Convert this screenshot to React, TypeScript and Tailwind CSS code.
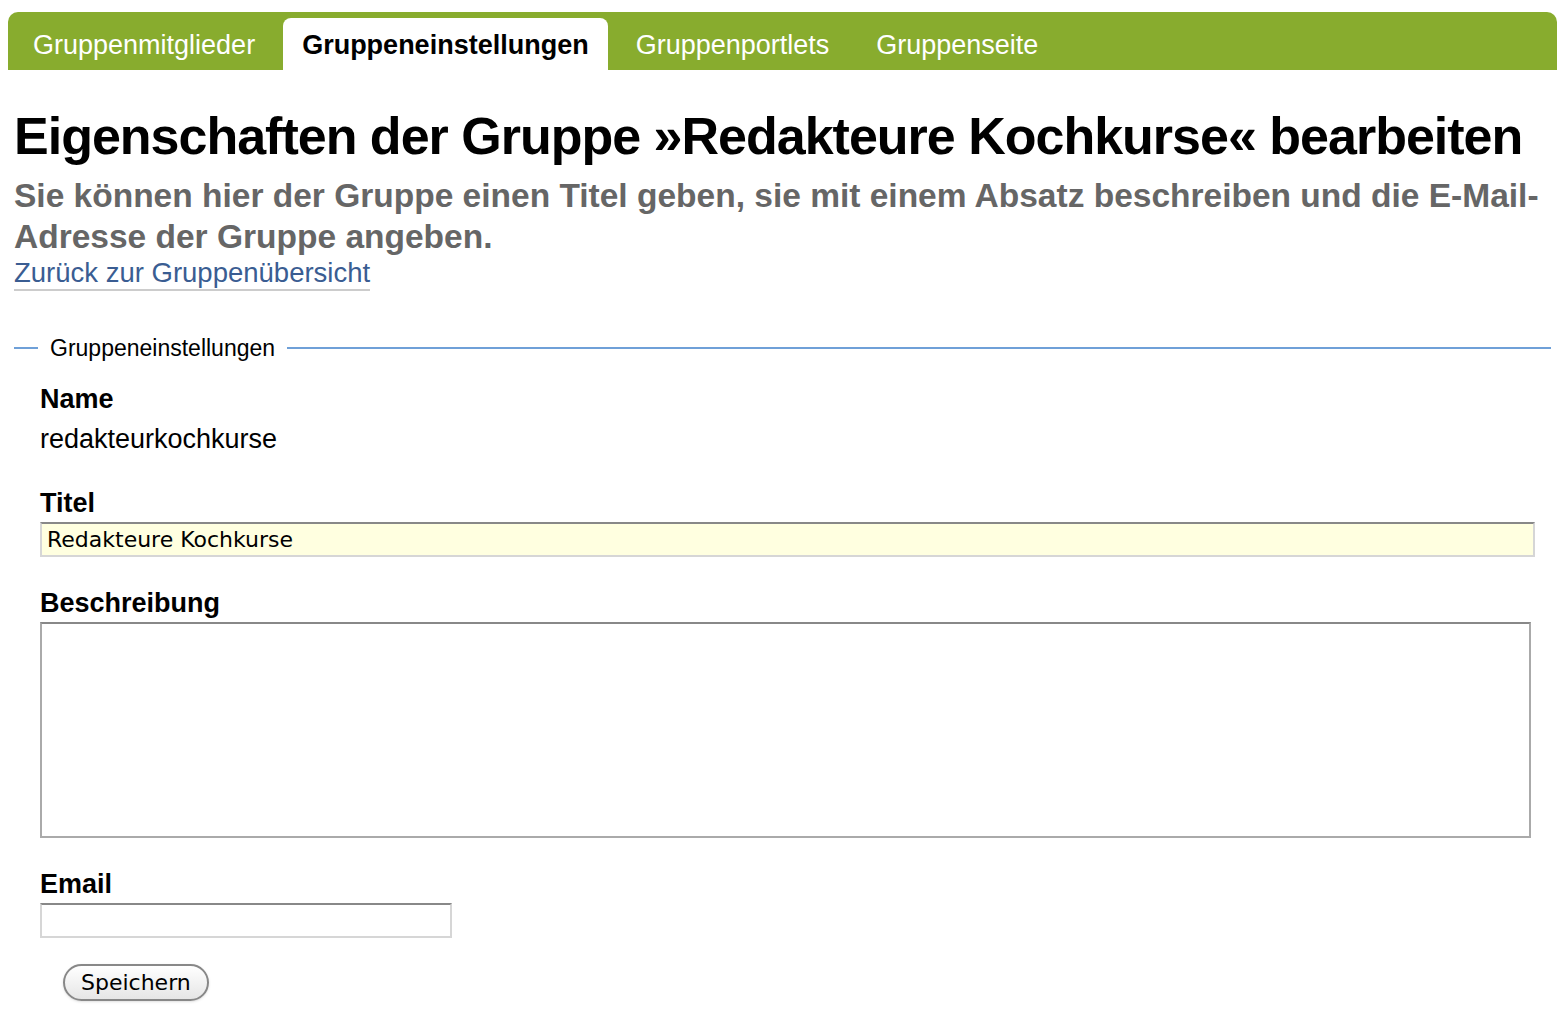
import React from "react";

const tabs = ["Gruppenmitglieder", "Gruppeneinstellungen", "Gruppenportlets", "Gruppenseite"];

export default function App() {
  return (
    <div className="min-h-screen bg-white px-[8px] pt-[12px] text-black" style={{ fontFamily: '"Liberation Sans", Arial, sans-serif' }}>
      {/* Tabs */}
      <div className="flex h-[58px] items-end gap-[9px] rounded-t-[10px] bg-[#88ac2e] pl-[6px]">
        {tabs.map((t, i) =>
          i === 1 ? (
            <div key={t} className="flex h-[52px] items-center rounded-t-[8px] bg-white px-[19px] pt-[2px] text-[27px] font-bold">
              {t}
            </div>
          ) : (
            <div key={t} className="flex h-[52px] items-center px-[19px] pt-[2px] text-[27px] text-white">
              {t}
            </div>
          )
        )}
      </div>

      <div className="px-[6px]">
        <h1 className="mt-[38px] text-[52px] font-bold leading-[56px] tracking-[-1px]">
          Eigenschaften der Gruppe »Redakteure Kochkurse« bearbeiten
        </h1>
        <p className="mt-[11px] text-[33.5px] font-bold leading-[41px] text-[#666666]">
          Sie können hier der Gruppe einen Titel geben, sie mit einem Absatz beschreiben und die E-Mail-Adresse der Gruppe angeben.
        </p>
        <a href="#" className="inline-block border-b-2 border-[#cccccc] text-[27.5px] leading-[32px] text-[#3a5d92]">
          Zurück zur Gruppenübersicht
        </a>

        {/* Form */}
        <fieldset className="mt-[44px] border-t-2 border-[#6fa0d8] pl-[24px]">
          <legend className="px-[12px] text-[23px] leading-[26px]">Gruppeneinstellungen</legend>
          <div className="pl-[2px]">
            <div className="mt-[23px] text-[27px] font-bold leading-[30px]">Name</div>
            <div className="mt-[10px] text-[27px] leading-[30px]">redakteurkochkurse</div>

            <div className="mt-[34px] text-[27px] font-bold leading-[30px]">Titel</div>
            <input
              defaultValue="Redakteure Kochkurse"
              className="mt-[4px] block h-[35px] w-[1495px] border-2 border-[#d6d6d6] border-t-[#888888] bg-[#ffffe0] px-[5px] text-[22px] outline-none"
              style={{ fontFamily: '"DejaVu Sans", sans-serif' }}
            />

            <div className="mt-[31px] text-[27px] font-bold leading-[30px]">Beschreibung</div>
            <textarea className="mt-[4px] block h-[216px] w-[1491px] resize-none border-2 border-[#aaaaaa] border-t-[#888888] bg-white outline-none" />

            <div className="mt-[31px] text-[27px] font-bold leading-[30px]">Email</div>
            <input className="mt-[4px] block h-[35px] w-[412px] border-2 border-[#d6d6d6] border-t-[#888888] bg-white outline-none" />

            <button
              className="ml-[23px] mt-[26px] h-[37px] rounded-full border-2 border-[#888888] bg-gradient-to-b from-white to-[#e6e6e6] px-[16px] text-[22px] shadow-sm"
              style={{ fontFamily: '"DejaVu Sans", sans-serif' }}
            >
              Speichern
            </button>
          </div>
        </fieldset>
      </div>
    </div>
  );
}
